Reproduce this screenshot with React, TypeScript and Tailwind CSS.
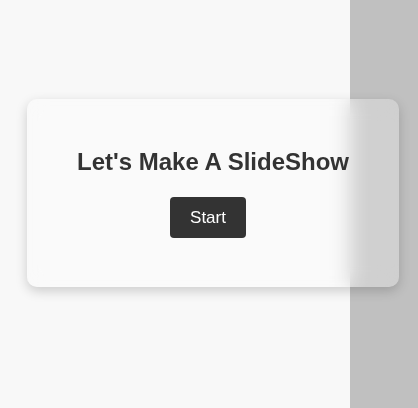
export default function App() {
  return (
    <div
      className="h-[408px] w-[418px] bg-[linear-gradient(to_right,#f8f8f8_350px,#c0c0c0_350px)] pl-[27px] pt-[99px]"
      style={{ fontFamily: '"Liberation Sans", Arial, sans-serif' }}
    >
      {/* Card */}
      <div className="flex h-[188px] w-[372px] flex-col items-center rounded-[10px] bg-white/25 pt-[49px] shadow-[0_4px_12px_rgba(0,0,0,0.18)] backdrop-blur-[10px]">
        <h2 className="text-[24px] font-bold leading-[28px] text-[#333]">Let's Make A SlideShow</h2>
        <button className="mr-[10px] mt-[21px] rounded-[4px] bg-[#333] px-[20px] py-[10px] text-[17px] leading-[21px] text-white">
          Start
        </button>
      </div>
    </div>
  );
}
